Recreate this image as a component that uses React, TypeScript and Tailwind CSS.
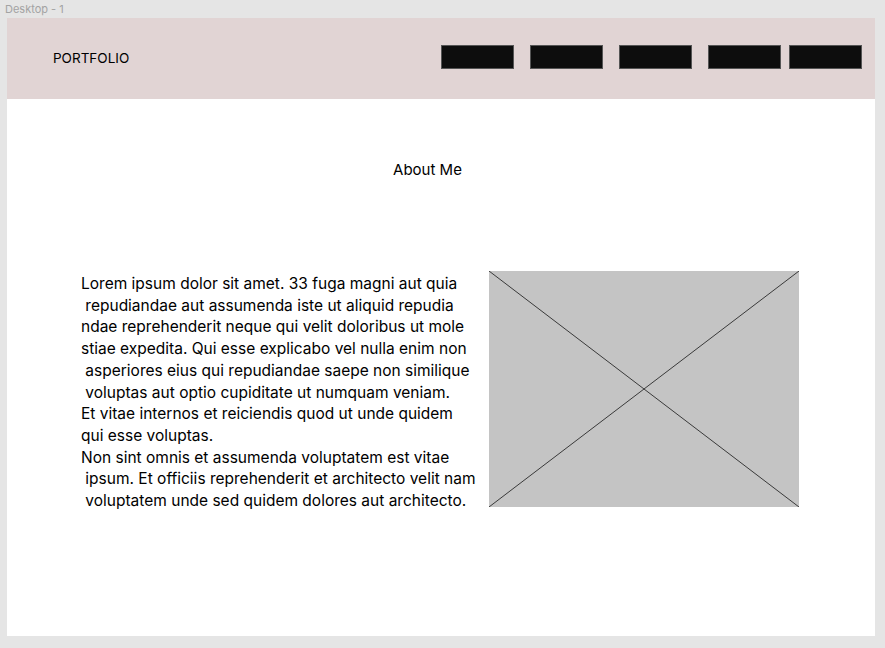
import React from "react";

const lines = [
  "Lorem ipsum dolor sit amet. 33 fuga magni aut quia",
  " repudiandae aut assumenda iste ut aliquid repudia",
  "ndae reprehenderit neque qui velit doloribus ut mole",
  "stiae expedita. Qui esse explicabo vel nulla enim non",
  " asperiores eius qui repudiandae saepe non similique",
  " voluptas aut optio cupiditate ut numquam veniam.",
  "Et vitae internos et reiciendis quod ut unde quidem",
  "qui esse voluptas.",
  "Non sint omnis et assumenda voluptatem est vitae",
  " ipsum. Et officiis reprehenderit et architecto velit nam",
  " voluptatem unde sed quidem dolores aut architecto.",
];

export default function App() {
  return (
    <div
      className="w-[885px] h-[648px] bg-[#e5e5e5] overflow-hidden"
      style={{ fontFamily: "Inter, 'Noto Sans', sans-serif" }}
    >
      <div className="h-[18px] pl-[5px] pt-[3px] text-[11px] leading-[13px] text-[#a3a3a3]">
        Desktop - 1
      </div>
      <div className="ml-[7px] w-[868px] h-[618px] bg-white flex flex-col">
        <header className="h-[81px] shrink-0 bg-[#e1d4d4] flex items-start justify-between pl-[46px] pr-[13px]">
          <div className="mt-[31px] text-[13.5px] leading-[18px] text-black">PORTFOLIO</div>
          <nav className="mt-[27px] flex">
            <div className="w-[73px] h-[24px] bg-[#0d0d0d] border border-[#555]" />
            <div className="ml-[16px] w-[73px] h-[24px] bg-[#0d0d0d] border border-[#555]" />
            <div className="ml-[16px] w-[73px] h-[24px] bg-[#0d0d0d] border border-[#555]" />
            <div className="ml-[16px] w-[73px] h-[24px] bg-[#0d0d0d] border border-[#555]" />
            <div className="ml-[8px] w-[73px] h-[24px] bg-[#0d0d0d] border border-[#555]" />
          </nav>
        </header>
        <h2 className="mt-[61px] text-center text-[15px] leading-[20px] text-black pr-[27px]">About Me</h2>
        <section className="mt-[91px] flex items-start pl-[74px]">
          <div className="w-[408px] mt-[2px] text-[15.5px] leading-[21.7px] text-black">
            {lines.map((l, i) => (
              <div key={i} className="whitespace-pre">
                {l}
              </div>
            ))}
          </div>
          <div className="w-[310px] h-[236px] bg-[#c4c4c4]">
            <svg width="310" height="236" viewBox="0 0 310 236" className="block">
              <line x1="0" y1="0" x2="310" y2="236" stroke="#3a3a3a" strokeWidth="1" />
              <line x1="0" y1="236" x2="310" y2="0" stroke="#3a3a3a" strokeWidth="1" />
            </svg>
          </div>
        </section>
      </div>
    </div>
  );
}
